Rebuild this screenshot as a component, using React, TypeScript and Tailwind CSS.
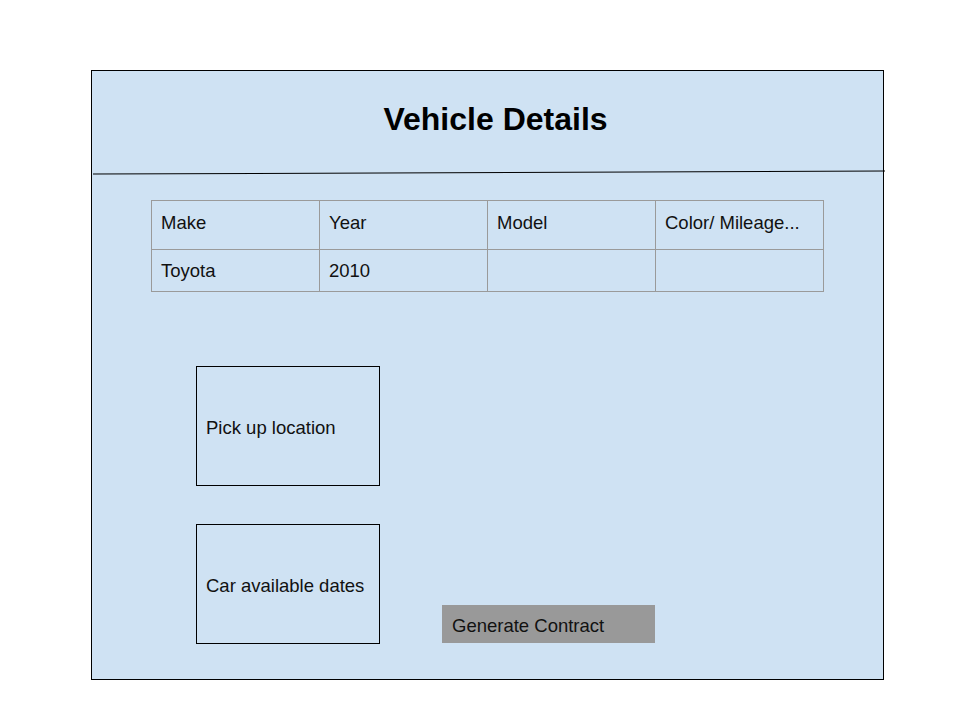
const columns = ["Make", "Year", "Model", "Color/ Mileage..."];
const values = ["Toyota", "2010", "", ""];

export default function App() {
  return (
    <div className="min-h-[720px] w-[960px] bg-white pt-[70px] pl-[91px] font-['Liberation_Sans',Arial,sans-serif] text-[#111]">
      <div className="w-[793px] h-[610px] border border-black bg-[#cfe2f3] flex flex-col">
        <div className="h-[101px] flex items-center justify-center pl-[16px] pb-[6px]">
          <h1 className="text-[32px] font-bold leading-none text-black">Vehicle Details</h1>
        </div>
        <div className="ml-[1px] w-[792px] border-t border-black -rotate-[0.22deg]" />

        <div className="ml-[59px] mt-[27px] w-[673px] grid grid-cols-4 border-l border-t border-[#9a9a9a]">
          {columns.map((c) => (
            <div key={c} className="h-[49px] border-r border-b border-[#9a9a9a] px-[9px] pt-[11px] text-[18.5px] leading-[21px]">
              {c}
            </div>
          ))}
          {values.map((v, i) => (
            <div key={i} className="h-[42px] border-r border-b border-[#9a9a9a] px-[9px] pt-[10px] text-[18.5px] leading-[21px]">
              {v}
            </div>
          ))}
        </div>

        <div className="ml-[104px] mt-[74px] w-[184px] h-[120px] border border-black flex items-center px-[9px] pt-[2px] text-[18.5px] leading-[21px]">
          Pick up location
        </div>

        <div className="ml-[104px] mt-[38px] flex items-end gap-[62px]">
          <div className="w-[184px] h-[120px] border border-black flex items-center px-[9px] pt-[2px] text-[18.5px] leading-[21px]">
            Car available dates
          </div>
          <button className="w-[213px] h-[38px] mb-[1px] bg-[#999999] flex items-center pl-[10px] pt-[3px] text-[18.5px] leading-[21px] text-[#111]">
            Generate Contract
          </button>
        </div>
      </div>
    </div>
  );
}
